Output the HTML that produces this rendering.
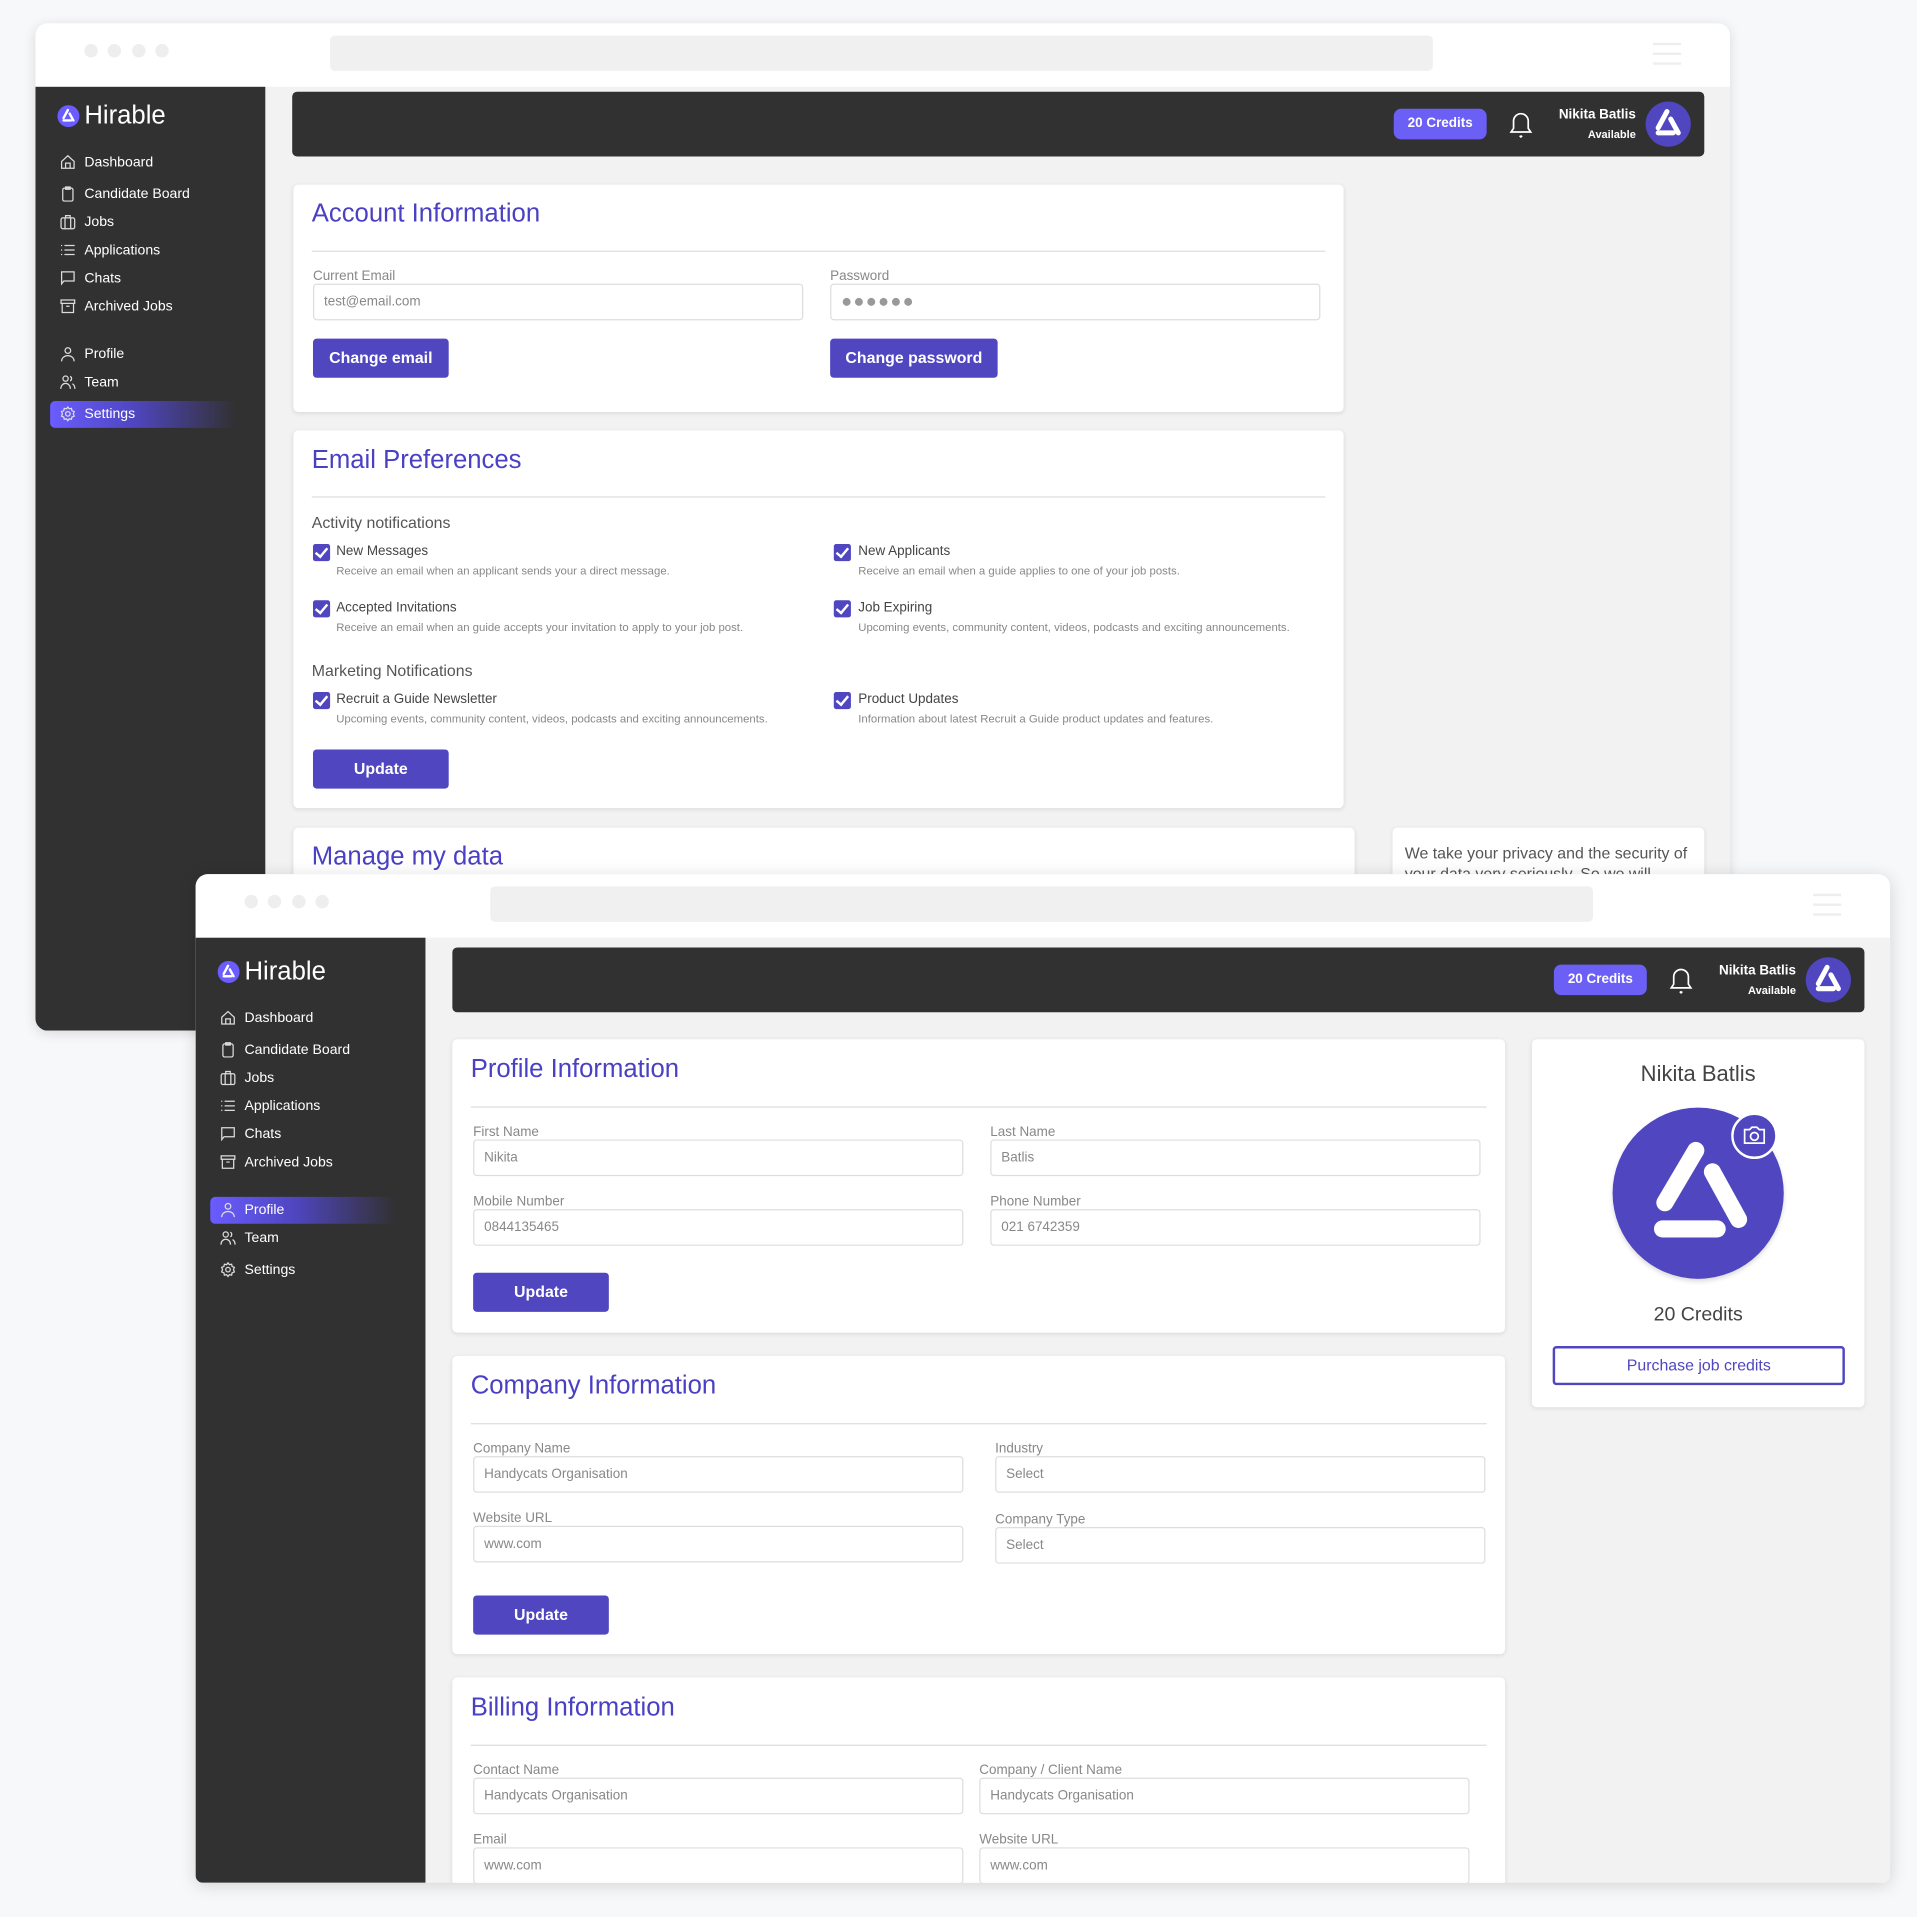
<!DOCTYPE html>
<html><head><meta charset="utf-8">
<style>
*{margin:0;padding:0;box-sizing:border-box}
html,body{width:1917px;height:1917px;overflow:hidden;background:#f7f8fa;font-family:"Liberation Sans",sans-serif}
#s{position:absolute;left:0;top:0;width:1568px;height:1568px;transform:scale(1.22258);transform-origin:0 0}
.a{position:absolute}
.win{position:absolute;width:1386px;background:#f2f2f2;border-radius:10px;overflow:hidden;box-shadow:0 2px 10px rgba(0,0,0,.12)}
.top{position:absolute;left:0;top:0;width:100%;height:52px;background:#fff}
.dot{position:absolute;top:17px;width:11px;height:11px;border-radius:50%;background:#eee}
.addr{position:absolute;left:241px;top:10px;width:902px;height:29px;background:#f0f0f0;border-radius:4px}
.ham{position:absolute;left:1323px;top:16px;width:23px;height:18px;border-top:2px solid #eee;border-bottom:2px solid #eee}
.ham:after{content:"";position:absolute;left:0;top:6px;width:23px;height:2px;background:#eee}
.side{position:absolute;left:0;top:52px;width:188px;bottom:0;background:#313131}
.logo{position:absolute;left:18px;top:12px;color:#fff;font-size:21px;line-height:24px;display:flex;align-items:center;gap:4px}
.nav{position:absolute;left:40px;color:#fff;font-size:11.5px;line-height:14px}
.ic{position:absolute;left:20px;width:13px;height:13px}
.hl{position:absolute;left:12px;width:152px;height:22px;border-radius:4px;background:linear-gradient(90deg,#6a5cff,#4f46c0 45%,rgba(49,49,49,0))}
.hdr{position:absolute;left:210px;top:56px;width:1155px;height:53px;background:#313131;border-radius:4px}
.cred{position:absolute;left:901px;top:14px;width:76px;height:25px;border-radius:6px;background:#6c5ff5;color:#fff;font-size:11px;font-weight:bold;text-align:center;line-height:25px}
.nm{position:absolute;right:56px;top:13px;color:#fff;font-size:11px;font-weight:bold;text-align:right;line-height:13px}
.nm small{display:block;font-size:9px;margin-top:3px}
.av{position:absolute;left:1107px;top:8px;width:37px;height:37px;border-radius:50%;background:#4f46c0}
.card{position:absolute;background:#fff;border-radius:4px;box-shadow:0 1px 4px rgba(0,0,0,.1)}
.h{position:absolute;left:15px;color:#4a40c3;font-size:21px;line-height:24px}
.hr{position:absolute;left:15px;right:15px;height:1px;background:#ddd}
.lb{position:absolute;color:#888;font-size:11px;line-height:12px}
.in{position:absolute;height:30px;border:1px solid #ddd;border-radius:3px;color:#888;font-size:11px;line-height:28px;padding-left:8px;background:#fff}
.btn{position:absolute;height:32px;background:#4f46c0;color:#fff;border-radius:3px;font-size:13px;font-weight:bold;text-align:center;line-height:32px}
.cb{position:absolute;width:14px;height:14px;background:#4f46c0;border-radius:2px}
.cb:after{content:"";position:absolute;left:4px;top:1px;width:4px;height:8px;border:solid #fff;border-width:0 2px 2px 0;transform:rotate(40deg)}
.ct{position:absolute;font-size:11px;color:#444;line-height:12px}
.cd{position:absolute;font-size:9.3px;color:#888;line-height:10px;white-space:nowrap}
.sec{position:absolute;font-size:13px;color:#555;line-height:14px}
</style></head><body><div id="s">

<!-- WINDOW 1 -->
<div class="win" style="left:29px;top:19px;height:824px">
 <div class="top"><div class="dot" style="left:40px"></div><div class="dot" style="left:59px"></div><div class="dot" style="left:79px"></div><div class="dot" style="left:98px"></div><div class="addr"></div><div class="ham"></div></div>
 <div class="side">
  <div class="logo"><svg width="18" height="18" viewBox="0 0 36 36"><circle cx="18" cy="18" r="18" fill="#6a5cff"/><path d="M17 8 L10 21 M20 14 L26 25 M10 25 L22 25" stroke="#fff" stroke-width="4" stroke-linecap="round" fill="none"/></svg>Hirable</div>
  <svg class="ic" style="top:55px" viewBox="0 0 14 14" fill="none" stroke="#ddd" stroke-width="1.1"><path d="M1.5 6.5 7 1.5l5.5 5v6h-11z M5 12.5V8h4v4.5"/></svg><div class="nav" style="top:55px">Dashboard</div>
  <svg class="ic" style="top:81px" viewBox="0 0 14 14" fill="none" stroke="#ddd" stroke-width="1.1"><rect x="2.5" y="2" width="9" height="11.5" rx="1.5"/><path d="M5 1h4v2H5z"/></svg><div class="nav" style="top:81px">Candidate Board</div>
  <svg class="ic" style="top:104px" viewBox="0 0 14 14" fill="none" stroke="#ddd" stroke-width="1.1"><rect x="1" y="3.5" width="12" height="9.5" rx="1.5"/><path d="M4.5 3.5V13 M9.5 3.5V13 M5 3.5V1.5h4v2"/></svg><div class="nav" style="top:104px">Jobs</div>
  <svg class="ic" style="top:127px" viewBox="0 0 14 14" fill="none" stroke="#ddd" stroke-width="1.1"><path d="M1 3h1M1 7h1M1 11h1M4 3h9M4 7h9M4 11h9"/></svg><div class="nav" style="top:127px">Applications</div>
  <svg class="ic" style="top:150px" viewBox="0 0 14 14" fill="none" stroke="#ddd" stroke-width="1.1"><path d="M1.5 1.5h11v8h-9l-2 2.5z"/></svg><div class="nav" style="top:150px">Chats</div>
  <svg class="ic" style="top:173px" viewBox="0 0 14 14" fill="none" stroke="#ddd" stroke-width="1.1"><path d="M1 1.5h12v3H1z M2 4.5v8h10v-8 M5.5 7h3"/></svg><div class="nav" style="top:173px">Archived Jobs</div>
  <svg class="ic" style="top:212px" viewBox="0 0 14 14" fill="none" stroke="#ddd" stroke-width="1.1"><circle cx="7" cy="4" r="2.5"/><path d="M1.5 13.5c0-3 2.5-5 5.5-5s5.5 2 5.5 5"/></svg><div class="nav" style="top:212px">Profile</div>
  <svg class="ic" style="top:235px" viewBox="0 0 14 14" fill="none" stroke="#ddd" stroke-width="1.1"><circle cx="5" cy="4" r="2.3"/><path d="M0.8 13c0-3 2-4.8 4.2-4.8s4.2 1.8 4.2 4.8 M9 2a2.2 2.2 0 0 1 0 4 M11 8.5c1.3.8 2.2 2.3 2.2 4.5"/></svg><div class="nav" style="top:235px">Team</div>
  <div class="hl" style="top:257px"></div>
  <svg class="ic" style="top:261px" viewBox="0 0 14 14" fill="none" stroke="#ddd" stroke-width="1.1"><circle cx="7" cy="7" r="2"/><path d="M7 1l1.2 1.6 2-.4.4 2L12.6 5l-.8 2 .8 2-2 .8-.4 2-2-.4L7 13l-1.2-1.6-2 .4-.4-2L1.4 9l.8-2-.8-2 2-.8.4-2 2 .4z"/></svg><div class="nav" style="top:261px">Settings</div>
 </div>
 <div class="hdr">
  <div class="cred">20 Credits</div>
  <svg class="a" style="left:994px;top:14px" width="22" height="26" viewBox="0 0 22 26" fill="none" stroke="#fff" stroke-width="1.4"><path d="M3 19h16l-2-3V10a6 6 0 0 0-12 0v6z M10 22l1 1 1-1"/></svg>
  <div class="nm">Nikita Batlis<small>Available</small></div>
  <div class="av"><svg width="37" height="37" viewBox="0 0 36 36"><path d="M17 8 L10 21 M20 14 L26 25 M10 25 L22 25" stroke="#fff" stroke-width="4" stroke-linecap="round" fill="none"/></svg></div>
 </div>
 <div class="card" style="left:211px;top:132px;width:859px;height:186px">
  <div class="h" style="top:12px">Account Information</div>
  <div class="hr" style="top:54px"></div>
  <div class="lb" style="left:16px;top:69px">Current Email</div>
  <div class="in" style="left:16px;top:81px;width:401px">test@email.com</div>
  <div class="lb" style="left:439px;top:69px">Password</div>
  <div class="in" style="left:439px;top:81px;width:401px;color:#999;font-size:15px;letter-spacing:1px">●●●●●●</div>
  <div class="btn" style="left:16px;top:126px;width:111px">Change email</div>
  <div class="btn" style="left:439px;top:126px;width:137px">Change password</div>
 </div>
 <div class="card" style="left:211px;top:333px;width:859px;height:309px">
  <div class="h" style="top:13px">Email Preferences</div>
  <div class="hr" style="top:54px"></div>
  <div class="sec" style="left:15px;top:69px">Activity notifications</div>
  <div class="cb" style="left:16px;top:93px"></div><div class="ct" style="left:35px;top:93px">New Messages</div><div class="cd" style="left:35px;top:110px">Receive an email when an applicant sends your a direct message.</div>
  <div class="cb" style="left:442px;top:93px"></div><div class="ct" style="left:462px;top:93px">New Applicants</div><div class="cd" style="left:462px;top:110px">Receive an email when a guide applies to one of your job posts.</div>
  <div class="cb" style="left:16px;top:139px"></div><div class="ct" style="left:35px;top:139px">Accepted Invitations</div><div class="cd" style="left:35px;top:156px">Receive an email when an guide accepts your invitation to apply to your job post.</div>
  <div class="cb" style="left:442px;top:139px"></div><div class="ct" style="left:462px;top:139px">Job Expiring</div><div class="cd" style="left:462px;top:156px">Upcoming events, community content, videos, podcasts and exciting announcements.</div>
  <div class="sec" style="left:15px;top:190px">Marketing Notifications</div>
  <div class="cb" style="left:16px;top:214px"></div><div class="ct" style="left:35px;top:214px">Recruit a Guide Newsletter</div><div class="cd" style="left:35px;top:231px">Upcoming events, community content, videos, podcasts and exciting announcements.</div>
  <div class="cb" style="left:442px;top:214px"></div><div class="ct" style="left:462px;top:214px">Product Updates</div><div class="cd" style="left:462px;top:231px">Information about latest Recruit a Guide product updates and features.</div>
  <div class="btn" style="left:16px;top:261px;width:111px">Update</div>
 </div>
 <div class="card" style="left:211px;top:658px;width:868px;height:200px"><div class="h" style="top:12px">Manage my data</div></div>
 <div class="card" style="left:1110px;top:658px;width:255px;height:200px"><div class="a" style="left:10px;top:12px;font-size:13px;color:#555;line-height:17px;width:240px">We take your privacy and the security of your data very seriously. So we will</div></div>
</div>

<!-- WINDOW 2 -->
<div class="win" style="left:160px;top:715px;height:825px;border-radius:10px 10px 6px 6px;box-shadow:0 2px 14px rgba(0,0,0,.15)">
 <div class="top"><div class="dot" style="left:40px"></div><div class="dot" style="left:59px"></div><div class="dot" style="left:79px"></div><div class="dot" style="left:98px"></div><div class="addr"></div><div class="ham"></div></div>
 <div class="side">
  <div class="logo" style="top:16px"><svg width="18" height="18" viewBox="0 0 36 36"><circle cx="18" cy="18" r="18" fill="#6a5cff"/><path d="M17 8 L10 21 M20 14 L26 25 M10 25 L22 25" stroke="#fff" stroke-width="4" stroke-linecap="round" fill="none"/></svg>Hirable</div>
  <svg class="ic" style="top:59px" viewBox="0 0 14 14" fill="none" stroke="#ddd" stroke-width="1.1"><path d="M1.5 6.5 7 1.5l5.5 5v6h-11z M5 12.5V8h4v4.5"/></svg><div class="nav" style="top:59px">Dashboard</div>
  <svg class="ic" style="top:85px" viewBox="0 0 14 14" fill="none" stroke="#ddd" stroke-width="1.1"><rect x="2.5" y="2" width="9" height="11.5" rx="1.5"/><path d="M5 1h4v2H5z"/></svg><div class="nav" style="top:85px">Candidate Board</div>
  <svg class="ic" style="top:108px" viewBox="0 0 14 14" fill="none" stroke="#ddd" stroke-width="1.1"><rect x="1" y="3.5" width="12" height="9.5" rx="1.5"/><path d="M4.5 3.5V13 M9.5 3.5V13 M5 3.5V1.5h4v2"/></svg><div class="nav" style="top:108px">Jobs</div>
  <svg class="ic" style="top:131px" viewBox="0 0 14 14" fill="none" stroke="#ddd" stroke-width="1.1"><path d="M1 3h1M1 7h1M1 11h1M4 3h9M4 7h9M4 11h9"/></svg><div class="nav" style="top:131px">Applications</div>
  <svg class="ic" style="top:154px" viewBox="0 0 14 14" fill="none" stroke="#ddd" stroke-width="1.1"><path d="M1.5 1.5h11v8h-9l-2 2.5z"/></svg><div class="nav" style="top:154px">Chats</div>
  <svg class="ic" style="top:177px" viewBox="0 0 14 14" fill="none" stroke="#ddd" stroke-width="1.1"><path d="M1 1.5h12v3H1z M2 4.5v8h10v-8 M5.5 7h3"/></svg><div class="nav" style="top:177px">Archived Jobs</div>
  <div class="hl" style="top:212px"></div>
  <svg class="ic" style="top:216px" viewBox="0 0 14 14" fill="none" stroke="#ddd" stroke-width="1.1"><circle cx="7" cy="4" r="2.5"/><path d="M1.5 13.5c0-3 2.5-5 5.5-5s5.5 2 5.5 5"/></svg><div class="nav" style="top:216px">Profile</div>
  <svg class="ic" style="top:239px" viewBox="0 0 14 14" fill="none" stroke="#ddd" stroke-width="1.1"><circle cx="5" cy="4" r="2.3"/><path d="M0.8 13c0-3 2-4.8 4.2-4.8s4.2 1.8 4.2 4.8 M9 2a2.2 2.2 0 0 1 0 4 M11 8.5c1.3.8 2.2 2.3 2.2 4.5"/></svg><div class="nav" style="top:239px">Team</div>
  <svg class="ic" style="top:265px" viewBox="0 0 14 14" fill="none" stroke="#ddd" stroke-width="1.1"><circle cx="7" cy="7" r="2"/><path d="M7 1l1.2 1.6 2-.4.4 2L12.6 5l-.8 2 .8 2-2 .8-.4 2-2-.4L7 13l-1.2-1.6-2 .4-.4-2L1.4 9l.8-2-.8-2 2-.8.4-2 2 .4z"/></svg><div class="nav" style="top:265px">Settings</div>
 </div>
 <div class="hdr" style="top:60px">
  <div class="cred">20 Credits</div>
  <svg class="a" style="left:994px;top:14px" width="22" height="26" viewBox="0 0 22 26" fill="none" stroke="#fff" stroke-width="1.4"><path d="M3 19h16l-2-3V10a6 6 0 0 0-12 0v6z M10 22l1 1 1-1"/></svg>
  <div class="nm">Nikita Batlis<small>Available</small></div>
  <div class="av"><svg width="37" height="37" viewBox="0 0 36 36"><path d="M17 8 L10 21 M20 14 L26 25 M10 25 L22 25" stroke="#fff" stroke-width="4" stroke-linecap="round" fill="none"/></svg></div>
 </div>
 <div class="card" style="left:210px;top:135px;width:861px;height:240px">
  <div class="h" style="top:13px">Profile Information</div>
  <div class="hr" style="top:55px"></div>
  <div class="lb" style="left:17px;top:70px">First Name</div><div class="in" style="left:17px;top:82px;width:401px">Nikita</div>
  <div class="lb" style="left:440px;top:70px">Last Name</div><div class="in" style="left:440px;top:82px;width:401px">Batlis</div>
  <div class="lb" style="left:17px;top:127px">Mobile Number</div><div class="in" style="left:17px;top:139px;width:401px">0844135465</div>
  <div class="lb" style="left:440px;top:127px">Phone Number</div><div class="in" style="left:440px;top:139px;width:401px">021 6742359</div>
  <div class="btn" style="left:17px;top:191px;width:111px">Update</div>
 </div>
 <div class="card" style="left:210px;top:394px;width:861px;height:244px">
  <div class="h" style="top:13px">Company Information</div>
  <div class="hr" style="top:55px"></div>
  <div class="lb" style="left:17px;top:70px">Company Name</div><div class="in" style="left:17px;top:82px;width:401px">Handycats Organisation</div>
  <div class="lb" style="left:444px;top:70px">Industry</div><div class="in" style="left:444px;top:82px;width:401px">Select</div>
  <div class="lb" style="left:17px;top:127px">Website URL</div><div class="in" style="left:17px;top:139px;width:401px">www.com</div>
  <div class="lb" style="left:444px;top:128px">Company Type</div><div class="in" style="left:444px;top:140px;width:401px">Select</div>
  <div class="btn" style="left:17px;top:196px;width:111px">Update</div>
 </div>
 <div class="card" style="left:210px;top:657px;width:861px;height:200px">
  <div class="h" style="top:13px">Billing Information</div>
  <div class="hr" style="top:55px"></div>
  <div class="lb" style="left:17px;top:70px">Contact Name</div><div class="in" style="left:17px;top:82px;width:401px">Handycats Organisation</div>
  <div class="lb" style="left:431px;top:70px">Company / Client Name</div><div class="in" style="left:431px;top:82px;width:401px">Handycats Organisation</div>
  <div class="lb" style="left:17px;top:127px">Email</div><div class="in" style="left:17px;top:139px;width:401px">www.com</div>
  <div class="lb" style="left:431px;top:127px">Website URL</div><div class="in" style="left:431px;top:139px;width:401px">www.com</div>
 </div>
 <div class="card" style="left:1093px;top:135px;width:272px;height:301px">
  <div class="a" style="left:0;width:272px;top:18px;text-align:center;font-size:18px;color:#444;line-height:20px">Nikita Batlis</div>
  <div class="a" style="left:66px;top:56px;width:140px;height:140px;border-radius:50%;background:#4f46c0;box-shadow:0 2px 4px rgba(0,0,0,.15)">
   <svg width="140" height="140" viewBox="0 0 36 36"><path d="M17.5 9 L11 20 M21 13.5 L26.5 23.5 M10.5 25.5 L22 25.5" stroke="#fff" stroke-width="3.6" stroke-linecap="round" fill="none"/></svg>
  </div>
  <div class="a" style="left:163px;top:60px;width:38px;height:38px;border-radius:50%;background:#4f46c0;border:2px solid #fff">
   <svg width="34" height="34" viewBox="0 0 34 34" fill="none" stroke="#fff" stroke-width="1.4"><path d="M9 12h4l2-2h4l2 2h4v11H9z"/><circle cx="17" cy="17.5" r="3.2"/></svg>
  </div>
  <div class="a" style="left:0;width:272px;top:217px;text-align:center;font-size:16px;color:#444;line-height:18px">20 Credits</div>
  <div class="a" style="left:17px;top:251px;width:239px;height:32px;border:2px solid #4f46c0;border-radius:3px;color:#4f46c0;font-size:13px;text-align:center;line-height:28px">Purchase job credits</div>
 </div>
</div>

</div></body></html>
